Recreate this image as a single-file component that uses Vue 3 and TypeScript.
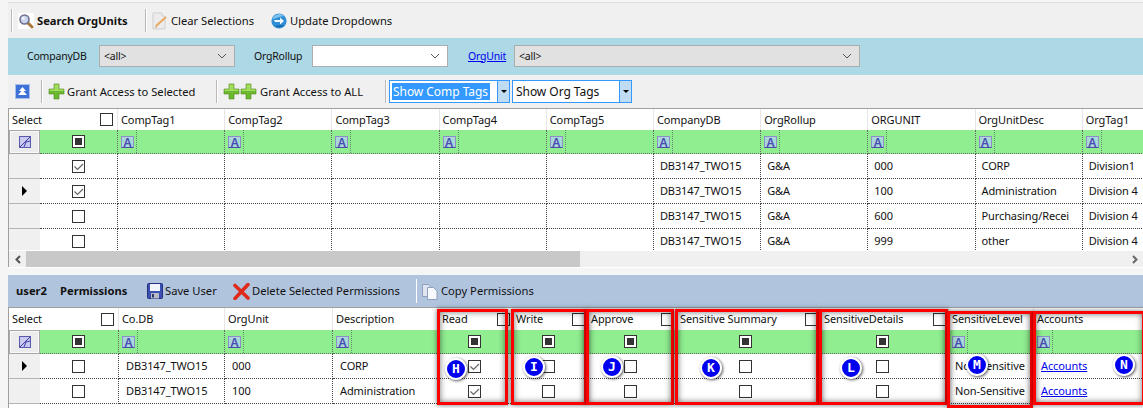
<script setup lang="ts">
type Col = { label: string; kind: 'text' | 'check'; shift?: string }
const topCols: string[] = ['CompTag1', 'CompTag2', 'CompTag3', 'CompTag4', 'CompTag5', 'CompanyDB', 'OrgRollup', 'ORGUNIT', 'OrgUnitDesc', 'OrgTag1']
const topRows = [
  { sel: true, cur: false, vals: ['', '', '', '', '', 'DB3147_TWO15', 'G&A', '000', 'CORP', 'Division1'] },
  { sel: true, cur: true, vals: ['', '', '', '', '', 'DB3147_TWO15', 'G&A', '100', 'Administration', 'Division 4'] },
  { sel: false, cur: false, vals: ['', '', '', '', '', 'DB3147_TWO15', 'G&A', '600', 'Purchasing/Recei', 'Division 4'] },
  { sel: false, cur: false, vals: ['', '', '', '', '', 'DB3147_TWO15', 'G&A', '999', 'other', 'Division 4'] },
]
const botCols: Col[] = [
  { label: 'Select', kind: 'check', shift: 'sh1' },
  { label: 'Co.DB', kind: 'text' },
  { label: 'OrgUnit', kind: 'text' },
  { label: 'Description', kind: 'text' },
  { label: 'Read', kind: 'check', shift: 'sh1' },
  { label: 'Write', kind: 'check', shift: 'sh2' },
  { label: 'Approve', kind: 'check', shift: 'sh2' },
  { label: 'Sensitive Summary', kind: 'check', shift: 'sh3' },
  { label: 'SensitiveDetails', kind: 'check', shift: 'sh2' },
  { label: 'SensitiveLevel', kind: 'text' },
  { label: 'Accounts', kind: 'text' },
]
const botRows: { cur: boolean; cells: (string | boolean)[] }[] = [
  { cur: true, cells: [false, 'DB3147_TWO15', '000', 'CORP', true, false, false, false, false, 'Non-Sensitive', 'Accounts'] },
  { cur: false, cells: [false, 'DB3147_TWO15', '100', 'Administration', true, false, false, false, false, 'Non-Sensitive', 'Accounts'] },
]
const boxes = [
  { l: 437, t: 309, w: 71, h: 96 },
  { l: 511, t: 309, w: 76, h: 96 },
  { l: 586, t: 309, w: 88, h: 96 },
  { l: 675, t: 309, w: 144, h: 96 },
  { l: 819, t: 309, w: 129, h: 96 },
  { l: 947, t: 311, w: 86, h: 97 },
  { l: 1033, t: 311, w: 112, h: 94 },
]
const marks = [
  { c: 'H', x: 456, y: 369 },
  { c: 'I', x: 534, y: 367 },
  { c: 'J', x: 612, y: 367 },
  { c: 'K', x: 711, y: 368 },
  { c: 'L', x: 851, y: 368 },
  { c: 'M', x: 977, y: 365 },
  { c: 'N', x: 1124, y: 365 },
]
</script>

<template>
  <div class="app">
    <div class="toolbar tb1">
      <span class="sep first"></span>
      <span class="tool strong">
        <span class="whitebox">
          <svg width="16" height="16" viewBox="0 0 16 16">
            <path d="M9.5 9.5 14 14" stroke="#a8793a" stroke-width="3" stroke-linecap="round" />
            <circle cx="6.5" cy="6.5" r="4.5" fill="#c8d4ec" stroke="#6f6f8e" stroke-width="1.6" />
            <circle cx="5.3" cy="5.3" r="1.5" fill="#eef2fb" />
          </svg>
        </span>
        Search OrgUnits
      </span>
      <span class="sep"></span>
      <span class="tool t-clear">
        <svg width="16" height="18" viewBox="0 0 16 18">
          <path d="M1 1h9l3 3v13H1z" fill="#ececec" stroke="#cfcfcf" />
          <path d="M10 1v3h3" fill="#fff" stroke="#cfcfcf" />
          <path d="M4 14 14 5" stroke="#e8a860" stroke-width="2" />
          <path d="M3 16l1-2 1 1z" fill="#c07830" />
        </svg>
        Clear Selections
      </span>
      <span class="tool t-update">
        <svg width="16" height="18" viewBox="0 0 16 18">
          <circle cx="8" cy="9" r="7.6" fill="#2f8fd6" />
          <path d="M1.4 7.5A7 7 0 0 1 13 4L8 5z" fill="#7fc4ee" />
          <path d="M3 8h6V5.500l4 3.500-4 3.500V10H4z" fill="#f4fafe" />
          <path d="M4 14a7 7 0 0 0 9-1l-4 0z" fill="#1668ac" />
        </svg>
        Update Dropdowns
      </span>
    </div>

    <div class="band">
      <label class="lab l1">CompanyDB</label>
      <div class="combo gray c1"><span>&lt;all&gt;</span><svg width="10" height="6" viewBox="0 0 10 6"><path d="M1 1l4 4 4-4" fill="none" stroke="#555" /></svg></div>
      <label class="lab l2">OrgRollup</label>
      <div class="combo c2"><span></span><svg width="10" height="6" viewBox="0 0 10 6"><path d="M1 1l4 4 4-4" fill="none" stroke="#555" /></svg></div>
      <a class="lnk lab l3">OrgUnit</a>
      <div class="combo gray c3"><span>&lt;all&gt;</span><svg width="10" height="6" viewBox="0 0 10 6"><path d="M1 1l4 4 4-4" fill="none" stroke="#555" /></svg></div>
    </div>

    <div class="toolbar tb2">
      <span class="upbtn">
        <svg width="9" height="9" viewBox="0 0 9 9"><path d="M4.500 0 8 4H1zM4.500 3 9 8H0z" fill="#fff" /></svg>
      </span>
      <span class="sep s2"></span>
      <span class="tool t-grant">
        <svg class="plus" width="17" height="17" viewBox="0 0 17 17"><path d="M6 1h5v5h5v5h-5v5H6v-5H1V6h5z" fill="#6cb82e" stroke="#4d8f1c" stroke-width=".6" /><path d="M6.500 1.500h4v5h-4zM1.500 6.500h14v1.500h-14z" fill="#a3dc5f" /></svg>
        Grant Access to Selected
      </span>
      <span class="sep s3"></span>
      <span class="tool t-grantall">
        <span class="plus2">
          <svg width="17" height="17" viewBox="0 0 17 17"><path d="M6 1h5v5h5v5h-5v5H6v-5H1V6h5z" fill="#6cb82e" stroke="#4d8f1c" stroke-width=".6" /><path d="M6.500 1.500h4v5h-4zM1.500 6.500h14v1.500h-14z" fill="#a3dc5f" /></svg>
          <svg width="17" height="17" viewBox="0 0 17 17"><path d="M6 1h5v5h5v5h-5v5H6v-5H1V6h5z" fill="#6cb82e" stroke="#4d8f1c" stroke-width=".6" /><path d="M6.500 1.500h4v5h-4zM1.500 6.500h14v1.500h-14z" fill="#a3dc5f" /></svg>
        </span>
        Grant Access to ALL
      </span>
      <span class="sep s4"></span>
      <div class="tagcombo tc1"><span class="tagtext sel">Show Comp Tags</span><span class="tagbtn"></span></div>
      <div class="tagcombo tc2"><span class="tagtext">Show Org Tags</span><span class="tagbtn"></span></div>
    </div>

    <div class="panel top">
      <div class="grid gtop">
        <div class="c hd corner">Select<span class="cb hdcb"></span></div>
        <div v-for="h in topCols" :key="h" class="c hd">{{ h }}</div>

        <div class="c rowh fbtn"><span class="fi"><svg width="12" height="12" viewBox="0 0 12 12"><rect x=".5" y=".5" width="11" height="11" fill="#c9c9f0" stroke="#5a5ab0" /><path d="M1 11 11 1M5 11l2-5 4-1" fill="none" stroke="#3d3da8" /></svg></span></div>
        <div class="c ff center"><span class="cb mixed"></span></div>
        <div v-for="h in topCols" :key="'f' + h" class="c ff"><span class="ai">A</span><span class="fdiv"></span></div>

        <template v-for="(r, i) in topRows" :key="i">
          <div class="c rowh"><span v-if="r.cur" class="arrow"></span></div>
          <div class="c bd center"><span class="cb" :class="{ checked: r.sel }"><svg v-if="r.sel" width="11" height="11" viewBox="0 0 11 11"><path d="M1.500 5.500 4.500 8.500 10 3" fill="none" stroke="#666" stroke-width="1.200" /></svg></span></div>
          <div v-for="(v, j) in r.vals" :key="j" class="c bd tight">{{ v }}</div>
        </template>
      </div>
      <div class="hscroll">
        <span class="sbtn"><svg width="8" height="9" viewBox="0 0 8 9"><path d="M6 1 2.500 4.500 6 8" fill="none" stroke="#555" stroke-width="2" /></svg></span>
        <span class="thumb"></span>
        <span class="srest"><svg width="8" height="9" viewBox="0 0 8 9"><path d="M2 1l3.500 3.500L2 8" fill="none" stroke="#666" stroke-width="2" /></svg></span>
      </div>
    </div>

    <div class="gap"></div>

    <div class="strip">
      <b class="u1">user2</b>
      <b class="u2">Permissions</b>
      <span class="tool t-save">
        <svg width="16" height="16" viewBox="0 0 16 16"><rect x=".5" y=".5" width="15" height="15" rx="1" fill="#3b4fb0" stroke="#242f80" /><rect x="3" y="1" width="10" height="7" fill="#f2f4fb" /><rect x="4" y="10" width="8" height="5.500" fill="#b8bcc8" /><rect x="5" y="11" width="2" height="3.500" fill="#333a66" /></svg>
        Save User
      </span>
      <span class="tool t-del">
        <svg width="17" height="17" viewBox="0 0 17 17"><path d="M2 2.500 15 15M15 1.500 2 15.500" stroke="#e02a1c" stroke-width="3.600" stroke-linecap="round" /></svg>
        Delete Selected Permissions
      </span>
      <span class="sep wsep"></span>
      <span class="tool t-copy">
        <svg width="16" height="17" viewBox="0 0 16 17"><path d="M.5 1.500h6l3 3v9H.5z" fill="#dfe6f2" stroke="#8fa0bc" /><path d="M5.500 4.500h6l3.500 3.500v8.500H5.500z" fill="#f7f9fc" stroke="#8fa0bc" /></svg>
        Copy Permissions
      </span>
    </div>

    <div class="panel bot">
      <div class="grid gbot">
        <template v-for="(h, i) in botCols" :key="h.label">
          <div class="c hd" :class="{ wide: i === 0 }">{{ h.label }}<span v-if="h.kind === 'check'" class="cb hdcb"></span></div>
        </template>

        <div class="c rowh fbtn"><span class="fi"><svg width="12" height="12" viewBox="0 0 12 12"><rect x=".5" y=".5" width="11" height="11" fill="#c9c9f0" stroke="#5a5ab0" /><path d="M1 11 11 1M5 11l2-5 4-1" fill="none" stroke="#3d3da8" /></svg></span></div>
        <template v-for="h in botCols" :key="'f' + h.label">
          <div v-if="h.kind === 'check'" class="c ff center" :class="h.shift"><span class="cb mixed"></span></div>
          <div v-else class="c ff"><span class="ai">A</span><span class="fdiv"></span></div>
        </template>

        <template v-for="(r, i) in botRows" :key="i">
          <div class="c rowh"><span v-if="r.cur" class="arrow"></span></div>
          <template v-for="(v, j) in r.cells" :key="j">
            <div v-if="typeof v === 'boolean'" class="c bd center" :class="botCols[j].shift"><span class="cb" :class="{ checked: v }"><svg v-if="v" width="11" height="11" viewBox="0 0 11 11"><path d="M1.500 5.500 4.500 8.500 10 3" fill="none" stroke="#666" stroke-width="1.200" /></svg></span></div>
            <div v-else-if="v === 'Accounts'" class="c bd"><a class="lnk">{{ v }}</a></div>
            <div v-else class="c bd" :class="{ ns: j === 9 }">{{ v }}</div>
          </template>
        </template>
      </div>
    </div>

    <div v-for="(b, i) in boxes" :key="'b' + i" class="redbox" :style="{ left: b.l + 'px', top: b.t + 'px', width: b.w + 'px', height: b.h + 'px' }"></div>
    <div v-for="m in marks" :key="m.c" class="mark" :style="{ left: m.x - 11 + 'px', top: m.y - 11 + 'px' }">{{ m.c }}</div>
  </div>
</template>

<style>
html, body { margin: 0; padding: 0; background: #f5f5f5; }
</style>

<style scoped>
.app {
  position: relative;
  width: 1143px;
  height: 408px;
  box-sizing: border-box;
  padding: 2px 0 0 8px;
  overflow: hidden;
  background: #f5f5f5;
  font-family: "Noto Sans", "Liberation Sans", sans-serif;
  font-size: 11.2px;
  line-height: 16px;
  color: #111;
}
svg { display: block; flex: none; }
.toolbar {
  display: flex;
  align-items: center;
  background: #f0f0f0;
}
.tb1 { border-top: 1px solid #ddd; box-sizing: border-box; padding-left: 3px; height: 36px; }
.tool { display: inline-flex; align-items: center; gap: 3px; white-space: nowrap; flex: none; }
.strong { font-weight: 700; margin-left: 5px; width: 110px; }
.whitebox { display: block; background: #fff; }
.sep { display: block; width: 1px; height: 23px; background: #b9b9b9; border-right: 1px solid #fff; flex: none; }
.tb1 .sep:not(.first) { margin-left: 17px; }
.t-clear { margin-left: 5px; width: 102px; }
.t-update { margin-left: 17px; }
.band {
  display: flex;
  align-items: center;
  box-sizing: border-box;
  height: 37px;
  padding-bottom: 2px;
  background: #add8e6;
  font-size: 10.5px;
  letter-spacing: -0.2px;
}
.lab { display: block; flex: none; }
.l1 { margin-left: 19px; width: 72px; }
.combo {
  display: flex;
  align-items: center;
  justify-content: space-between;
  box-sizing: border-box;
  height: 22px;
  padding: 0 7px 0 4px;
  border: 1px solid #adadad;
  background: #fff;
  flex: none;
}
.gray { background: #e1e1e1; }
.c1 { width: 136px; }
.l2 { margin-left: 19px; width: 58px; }
.c2 { width: 136px; }
.l3 { margin-left: 20px; width: 46px; }
.c3 { width: 346px; }
.lnk { color: #0000ee; text-decoration: underline; }
.tb2 { height: 33px; padding-left: 7px; }
.upbtn {
  display: flex;
  align-items: center;
  justify-content: center;
  width: 15px;
  height: 15px;
  background: #3f72d8;
  border: 1px solid #a9bfe8;
  box-sizing: border-box;
  flex: none;
}
.s2 { margin-left: 11px; }
.t-grant { margin-left: 5px; width: 148px; gap: 2px; }
.s3 { margin-left: 20px; }
.t-grantall { margin-left: 5px; width: 142px; }
.plus2 { display: flex; }
.s4 { margin-left: 20px; }
.tagcombo {
  display: flex;
  align-items: stretch;
  justify-content: space-between;
  box-sizing: border-box;
  height: 23px;
  border: 1px solid #3399ff;
  background: #fff;
  padding-left: 2px;
  font-size: 12px;
  letter-spacing: -0.05px;
  flex: none;
}
.tc1 { margin-left: 2px; width: 121px; }
.tc2 { margin-left: 2px; width: 120px; }
.tagtext { align-self: center; padding: 0 1px; height: 17px; line-height: 17px; }
.sel { background: #3399ff; color: #fff; width: 98px; box-sizing: border-box; white-space: nowrap; }
.tagbtn {
  position: relative;
  width: 11px;
  background: #c0dcf3;
  border-left: 1px solid #3399ff;
}
.tagbtn::after {
  content: "";
  position: absolute;
  left: 3px;
  top: 9px;
  border: 3px solid transparent;
  border-top: 3px solid #000;
}
.panel { border-left: 1px solid #a0a0a0; border-top: 1px solid #a0a0a0; background: #fff; overflow: hidden; }
.grid { display: grid; overflow: hidden; font-size: 11px; letter-spacing: -0.1px; }
.gtop {
  grid-template-columns: 31px 78px repeat(10, 107.2px);
  grid-template-rows: 21px 24px 25px 25px 25px 25px;
  height: 141px;
}
.gbot {
  grid-template-columns: 31px 79px 106px 108px 106px 74px 75px 89px 144px 128px 85px 120px;
  grid-template-rows: 22px 24px 25px 25px;
}
.c {
  box-sizing: border-box;
  display: flex;
  align-items: center;
  white-space: nowrap;
  overflow: hidden;
  position: relative;
  min-width: 0;
}
.hd {
  padding-left: 3px;
  justify-content: space-between;
  background: #fff;
  border-right: 1px solid #e6e6e6;
}
.corner { grid-column: span 2; padding-right: 2px; }
.wide { grid-column: span 2; padding-right: 2px; }
.hd .hdcb { margin-right: 2px; flex: none; }
.rowh {
  justify-content: center;
  background: #f0f0f0;
  border-bottom: 1px solid #b5b5b5;
}
.fbtn { background: #ececec; border: 1px solid #a8a8a8; box-shadow: inset 0 0 0 1px #f8f8f8; }
.ff {
  background: #90ee90;
  border-right: 1px dotted #666;
  border-bottom: 1px dotted #666;
  padding-left: 3px;
}
.bd {
  background: #fff;
  padding-left: 7px;
  border-right: 1px dotted #444;
  border-bottom: 1px dotted #444;
}
.tight { padding-left: 6px; }
.ns { padding-left: 6px; }
.c.center { justify-content: center; padding: 0; }
.c.sh1 { padding-right: 2px; }
.c.sh2 { padding-right: 4px; }
.c.sh3 { padding-right: 6px; }
.cb {
  display: flex;
  align-items: center;
  justify-content: center;
  box-sizing: border-box;
  width: 13px;
  height: 13px;
  border: 1px solid #333;
  background: #fff;
  flex: none;
}
.mixed::after { content: ""; display: block; width: 7px; height: 7px; background: #333; }
.ai {
  display: block;
  box-sizing: border-box;
  width: 13px;
  height: 12px;
  background: #a8d8d8;
  border: 1px solid #8d8dc8;
  border-bottom-color: #4c4ca8;
  color: #4a4ab4;
  font-size: 12px;
  line-height: 11px;
  font-weight: 600;
  text-align: center;
  letter-spacing: 0;
  flex: none;
}
.fdiv { position: absolute; top: 0; bottom: 0; left: 18px; width: 0; border-left: 1px dotted #5f8a70; }
.arrow { display: block; width: 0; height: 0; border-left: 5px solid #000; border-top: 5px solid transparent; border-bottom: 5px solid transparent; }
.hscroll { display: flex; height: 16px; margin-top: 1px; background: #f0f0f0; }
.sbtn { display: flex; align-items: center; justify-content: center; width: 17px; flex: none; }
.thumb { display: block; width: 554px; background: #c8c8c8; flex: none; }
.srest { display: flex; flex: 1; align-items: center; justify-content: flex-end; padding-right: 4px; }
.gap { height: 8px; border-top: 1px solid #fff; box-sizing: border-box; }
.strip {
  display: flex;
  align-items: center;
  height: 32px;
  background: #b0c4de;
  padding-left: 8px;
}
.u1 { font-weight: 700; width: 44px; flex: none; }
.u2 { font-weight: 700; width: 68px; flex: none; }
.t-save { margin-left: 19px; width: 68px; gap: 2px; }
.t-del { margin-left: 18px; width: 165px; gap: 2px; }
.wsep { background: #fff; border: none; height: 24px; margin-left: 18px; }
.t-copy { margin-left: 5px; }
.bot { height: 100px; }
.redbox {
  position: absolute;
  box-sizing: border-box;
  border: 3px solid #ff0000;
  box-shadow: 0 0 5px rgba(0, 0, 0, 0.55), inset 0 0 6px rgba(0, 0, 0, 0.55);
}
.mark {
  position: absolute;
  box-sizing: border-box;
  width: 22px;
  height: 22px;
  border-radius: 50%;
  background: #0000ee;
  border: 2px solid #fff;
  box-shadow: 1px 1px 3px rgba(0, 0, 0, 0.65);
  color: #fff;
  font-family: "DejaVu Sans Mono", monospace;
  font-weight: 700;
  font-size: 13px;
  line-height: 18px;
  text-align: center;
}
</style>
